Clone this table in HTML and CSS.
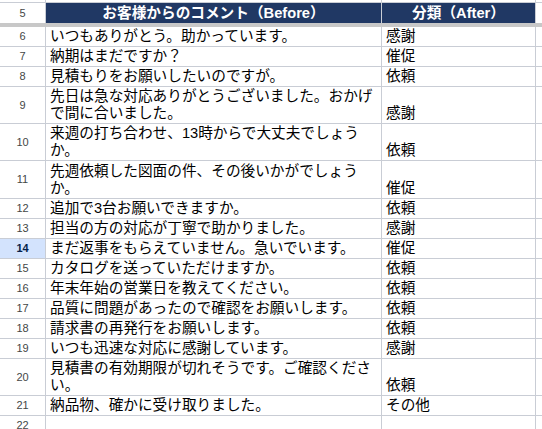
FILE: index.html
```html
<!DOCTYPE html>
<html lang="ja">
<head>
<meta charset="utf-8">
<title>Sheet</title>
<link rel="stylesheet" href="styles.css">
</head>
<body>
<div class="sheet">
  <div class="row stub"><div class="cell rh"></div><div class="cell"></div><div class="cell"></div><div class="cell"></div></div>
  <div class="row head"><div class="cell rh">5</div><div class="cell hd">お客様からのコメント（Before）</div><div class="cell hd">分類（After）</div><div class="cell"></div></div>
  <div class="freeze"></div>
  <div class="row"><div class="cell rh">6</div><div class="cell">いつもありがとう。助かっています。</div><div class="cell">感謝</div><div class="cell"></div></div>
  <div class="row"><div class="cell rh">7</div><div class="cell">納期はまだですか？</div><div class="cell">催促</div><div class="cell"></div></div>
  <div class="row"><div class="cell rh">8</div><div class="cell">見積もりをお願いしたいのですが。</div><div class="cell">依頼</div><div class="cell"></div></div>
  <div class="row tall"><div class="cell rh">9</div><div class="cell">先日は急な対応ありがとうございました。おかげで間に合いました。</div><div class="cell">感謝</div><div class="cell"></div></div>
  <div class="row tall"><div class="cell rh">10</div><div class="cell">来週の打ち合わせ、13時からで大丈夫でしょうか。</div><div class="cell">依頼</div><div class="cell"></div></div>
  <div class="row tall2"><div class="cell rh">11</div><div class="cell">先週依頼した図面の件、その後いかがでしょうか。</div><div class="cell">催促</div><div class="cell"></div></div>
  <div class="row"><div class="cell rh">12</div><div class="cell">追加で3台お願いできますか。</div><div class="cell">依頼</div><div class="cell"></div></div>
  <div class="row"><div class="cell rh">13</div><div class="cell">担当の方の対応が丁寧で助かりました。</div><div class="cell">感謝</div><div class="cell"></div></div>
  <div class="row"><div class="cell rh sel">14</div><div class="cell">まだ返事をもらえていません。急いでいます。</div><div class="cell">催促</div><div class="cell"></div></div>
  <div class="row"><div class="cell rh">15</div><div class="cell">カタログを送っていただけますか。</div><div class="cell">依頼</div><div class="cell"></div></div>
  <div class="row"><div class="cell rh">16</div><div class="cell">年末年始の営業日を教えてください。</div><div class="cell">依頼</div><div class="cell"></div></div>
  <div class="row"><div class="cell rh">17</div><div class="cell">品質に問題があったので確認をお願いします。</div><div class="cell">依頼</div><div class="cell"></div></div>
  <div class="row"><div class="cell rh">18</div><div class="cell">請求書の再発行をお願いします。</div><div class="cell">依頼</div><div class="cell"></div></div>
  <div class="row"><div class="cell rh">19</div><div class="cell">いつも迅速な対応に感謝しています。</div><div class="cell">感謝</div><div class="cell"></div></div>
  <div class="row tall"><div class="cell rh">20</div><div class="cell">見積書の有効期限が切れそうです。ご確認ください。</div><div class="cell">依頼</div><div class="cell"></div></div>
  <div class="row"><div class="cell rh">21</div><div class="cell">納品物、確かに受け取りました。</div><div class="cell">その他</div><div class="cell"></div></div>
  <div class="row"><div class="cell rh">22</div><div class="cell"></div><div class="cell"></div><div class="cell"></div></div>
</div>
</body>
</html>
```
FILE: styles.css
```css
html, body {
  margin: 0;
  padding: 0;
  background: #ffffff;
}

.sheet {
  width: 542px;
  height: 429px;
  overflow: hidden;
  font-family: "Liberation Sans", "Noto Sans CJK JP", sans-serif;
  font-size: 14.67px;
  line-height: 17px;
  color: #000000;
}

.row {
  display: grid;
  grid-template-columns: 45px 335px 153px 1fr;
  column-gap: 1px;
  background: #c9cdd5;
  border-bottom: 1px solid #c9cdd5;
  box-sizing: border-box;
  height: 20px;
}

.row.tall {
  height: 37px;
}

.row.tall2 {
  height: 38px;
}

.row.stub {
  height: 3px;
}

.row.head {
  height: 20px;
  border-bottom: none;
}

.cell {
  background: #ffffff;
  display: flex;
  align-items: flex-end;
  padding: 0 4px 1px;
  overflow: hidden;
  min-width: 0;
}

.stub .cell {
  padding: 0;
}

.rh {
  justify-content: center;
  align-items: center;
  padding: 0;
  font-size: 11px;
  color: #444746;
}

.rh.sel {
  background: #d3e3fd;
  color: #041e49;
  font-weight: bold;
}

.hd {
  background: #203864;
  color: #ffffff;
  font-weight: bold;
  justify-content: center;
  align-items: center;
  padding: 0 4px;
}

.freeze {
  height: 4px;
  background: #c8c8c8;
}
```
